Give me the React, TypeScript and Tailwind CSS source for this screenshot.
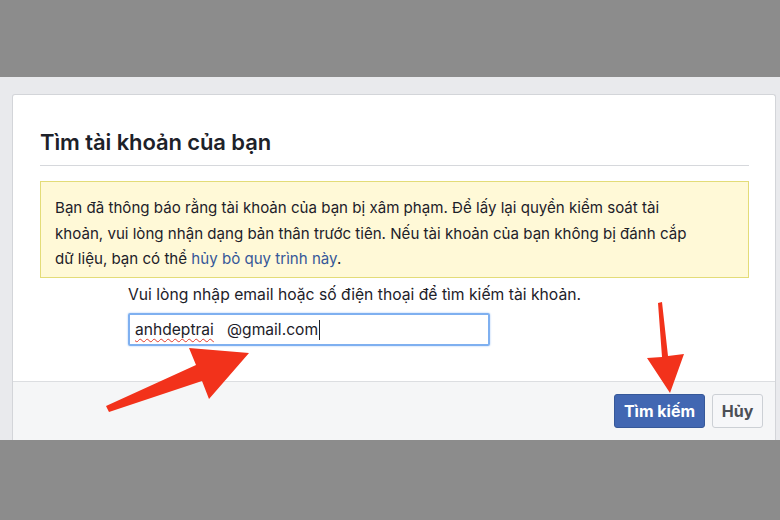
import React from "react"

const font = { fontFamily: "Inter, 'Liberation Sans', Arial, sans-serif" }

function Arrows() {
  return (
    <svg className="pointer-events-none absolute inset-0" width="780" height="520" viewBox="0 0 780 520">
      {/* arrow to the input */}
      <path d="M106 406 L196 365 L189 348 L249 353 L209 399 L202 381 L109 412 Z" fill="#f2321b" />
      {/* arrow to the search button */}
      <path d="M658 303 L662 302 L668 356 L684 354 L670 393 L647 358 L662 357 Z" fill="#f2321b" />
    </svg>
  )
}

export default function App() {
  return (
    <div className="relative flex h-[520px] w-[780px] flex-col bg-[#8c8c8c]" style={font}>
      <div className="h-[77px] shrink-0 bg-[#8c8c8c]" />
      <div className="flex h-[363px] shrink-0 bg-[#e9eaed] pl-[12px] pr-[4px] pt-[17px]">
        <div className="flex flex-1 flex-col overflow-hidden rounded-t-[3px] border border-b-0 border-[#d3d5d9] bg-white">
          <div className="flex-1 pl-[27px] pr-[26px]">
            <h2 className="flex h-[70px] items-center pt-[24px] text-[22px] font-semibold tracking-[-0.1px] text-[#1d2129]">
              Tìm tài khoản của bạn
            </h2>
            <div className="h-px bg-[#d6d8dc]" />
            <div className="mt-[15px] h-[97px] border border-[#e3dc78] bg-[#fff9d7] pl-[14px] pt-[13px] text-[15.1px] leading-[25.5px] text-[#1d2129]">
              Bạn đã thông báo rằng tài khoản của bạn bị xâm phạm. Để lấy lại quyền kiểm soát tài
              <br />
              khoản, vui lòng nhận dạng bản thân trước tiên. Nếu tài khoản của bạn không bị đánh cắp
              <br />
              dữ liệu, bạn có thể <span className="text-[#365899]">hủy bỏ quy trình này</span>.
            </div>
            <div className="pl-[88px]">
              <div className="pt-[6px] text-[15.7px] leading-[22px] text-[#1d2129]">
                Vui lòng nhập email hoặc số điện thoại để tìm kiếm tài khoản.
              </div>
              <div className="mt-[7px] flex h-[33px] w-[362px] items-center rounded-[2px] border-2 border-[#7fb0f0] pl-[5px] text-[15.6px] text-[#1d2129] shadow-[0_0_2px_#9cc3f5]">
                <span className="underline decoration-[#e0392b] decoration-wavy decoration-1 underline-offset-[3px]">anhdeptrai</span>
                <span className="whitespace-pre">   @gmail.com</span>
                <span className="ml-px h-[20px] w-px bg-[#1d2129]" />
              </div>
            </div>
          </div>
          <div className="flex h-[59px] shrink-0 items-center justify-end gap-[7px] border-t border-[#dcdee1] bg-[#f5f6f7] pr-[12px]">
            <button className="h-[34px] w-[91px] rounded-[3px] border border-[#365899] bg-[#4267b2] text-[16px] font-bold text-white">
              Tìm kiếm
            </button>
            <button className="h-[34px] w-[51px] rounded-[3px] border border-[#ccd0d5] bg-[#f6f7f9] text-[16px] font-bold text-[#4b4f56]">
              Hủy
            </button>
          </div>
        </div>
      </div>
      <div className="flex-1 bg-[#8c8c8c]" />
      <Arrows />
    </div>
  )
}
